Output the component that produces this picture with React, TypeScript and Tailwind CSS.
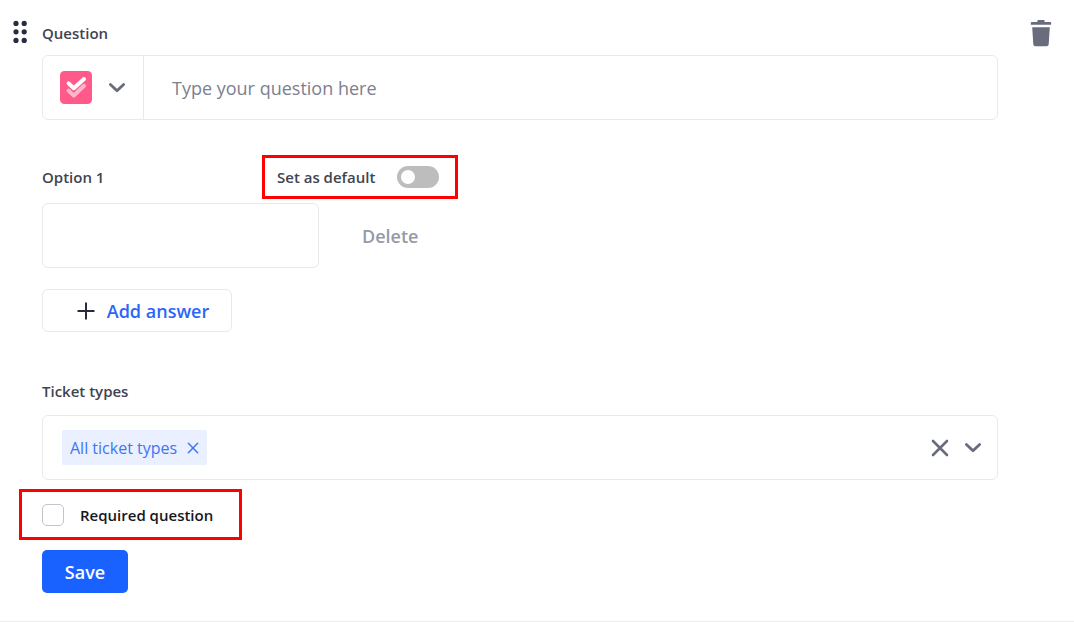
import { useState } from 'react';

function DragHandle() {
    return (
        <svg width="16" height="24" viewBox="0 0 16 24" fill="#272c3f" aria-hidden="true">
            {[3.4, 11.8, 20.4].map((y) => (
                <g key={y}>
                    <circle cx="4" cy={y} r="2.6" />
                    <circle cx="12.2" cy={y} r="2.6" />
                </g>
            ))}
        </svg>
    );
}

function TrashIcon() {
    return (
        <svg width="22" height="28" viewBox="0 1 22 28" fill="#686c7d" aria-hidden="true">
            <path d="M7.4 3V1.8Q7.4 1 8.3 1h5.4q.9 0 .9.8V3h5.6q1 0 1 1v1.8H.8V4q0-1 1-1z" />
            <path d="M2.2 8.2h17.6l-1.1 17q-.1 2-2.1 2H5.4q-2 0-2.1-2z" />
        </svg>
    );
}

function ChevronIcon() {
    return (
        <svg width="18" height="12" viewBox="0 0 18 12" fill="none" stroke="#686c7d" strokeWidth="2.8" aria-hidden="true">
            <path d="M2.4 2.4 9 8.8l6.6-6.4" strokeLinecap="round" strokeLinejoin="round" />
        </svg>
    );
}

function CrossIcon({ size, width }: { size: number; width: number }) {
    return (
        <svg width={size} height={size} viewBox="0 0 18 18" fill="none" stroke="currentColor" strokeWidth={width} aria-hidden="true">
            <path d="m2 2 14 14M16 2 2 16" strokeLinecap="round" />
        </svg>
    );
}

function MultiChoiceIcon() {
    return (
        <svg width="32" height="33" viewBox="0 0 32 33" fill="none" aria-hidden="true">
            <rect width="32" height="33" rx="4.5" fill="#ff5a8a" />
            <g strokeWidth="4" strokeLinecap="round" strokeLinejoin="round">
                <path d="m8.6 19.6 5.2 5 10.2-9.8" stroke="#ffb5cc" />
                <path d="m8.6 12.4 5.2 4.8L24 8" stroke="#fff" />
            </g>
        </svg>
    );
}

export default function App() {
    const [question, setQuestion] = useState('');
    const [answer, setAnswer] = useState('');
    const [isDefault, setIsDefault] = useState(false);
    const [required, setRequired] = useState(false);

    return (
        <form
            className="flex border-b border-[#ebecef] bg-white pt-5 pr-[22px] pb-7 pl-3 font-['Open_Sans',sans-serif] text-[#3f4451]"
            onSubmit={(e) => e.preventDefault()}
        >
            <button type="button" aria-label="Move question" className="mr-[14px] h-6 w-4 cursor-grab self-start">
                <DragHandle />
            </button>

            <div className="min-w-0 flex-1 pt-px">
                <label htmlFor="question" className="block text-[15px] leading-6 font-semibold">
                    Question
                </label>
                <div className="mt-[10px] flex h-[65px] rounded-md border border-[#e8e9ed]">
                    <button
                        type="button"
                        aria-label="Question type"
                        className="flex w-[101px] items-center gap-4 border-r border-[#e8e9ed] pl-[17px]"
                    >
                        <MultiChoiceIcon />
                        <ChevronIcon />
                    </button>
                    <input
                        id="question"
                        type="text"
                        value={question}
                        onChange={(e) => setQuestion(e.target.value)}
                        placeholder="Type your question here"
                        className="min-w-0 flex-1 rounded-r-md px-7 text-lg outline-none placeholder:text-[#7d808d]"
                    />
                </div>

                <div className="mt-[35px] flex items-center">
                    <label htmlFor="option-1" className="w-[220px] text-[15px] leading-6 font-semibold">
                        Option 1
                    </label>
                    <label className="flex h-11 w-[196px] items-center justify-between border-3 border-[#fd0000] pr-4 pl-3 text-[15px] leading-6 font-semibold">
                        Set as default
                        <input
                            type="checkbox"
                            role="switch"
                            checked={isDefault}
                            onChange={(e) => setIsDefault(e.target.checked)}
                            className="flex h-[22px] w-[42px] appearance-none items-center rounded-full bg-[#bdbdbd] px-1 before:size-[14px] before:rounded-full before:bg-white checked:justify-end checked:bg-[#1a62ff]"
                        />
                    </label>
                </div>
                <div className="mt-1 flex items-center">
                    <input
                        id="option-1"
                        type="text"
                        value={answer}
                        onChange={(e) => setAnswer(e.target.value)}
                        className="h-[65px] w-[277px] rounded-md border border-[#e8e9ed] px-5 text-lg outline-none"
                    />
                    <button type="button" className="ml-[43px] text-lg font-semibold text-[#969aa6]">
                        Delete
                    </button>
                </div>

                <button
                    type="button"
                    className="mt-[21px] flex h-[43px] w-[190px] items-center justify-center gap-3 rounded-md border border-[#e8e9ed] pl-3 text-lg font-semibold text-[#2b66f6]"
                >
                    <svg width="18" height="18" viewBox="0 0 18 18" stroke="#272c3f" strokeWidth="2" aria-hidden="true">
                        <path d="M9 .5v17M.5 9h17" />
                    </svg>
                    Add answer
                </button>

                <label htmlFor="ticket-types" className="mt-[47px] block text-[15px] leading-6 font-semibold">
                    Ticket types
                </label>
                <div className="mt-3 flex h-[65px] items-center rounded-md border border-[#e8e9ed] pr-[15px] pl-[19px]">
                    <span className="flex h-[35px] items-center gap-[10px] rounded-xs bg-[#eaf0ff] px-2 text-base text-[#4174f4]">
                        All ticket types
                        <button type="button" aria-label="Remove All ticket types">
                            <CrossIcon size={12} width={2.2} />
                        </button>
                    </span>
                    <input id="ticket-types" type="text" className="min-w-0 flex-1 px-2 outline-none" />
                    <button type="button" aria-label="Clear ticket types" className="mr-[15px] text-[#686c7d]">
                        <CrossIcon size={18} width={2.6} />
                    </button>
                    <button type="button" aria-label="Show ticket types">
                        <ChevronIcon />
                    </button>
                </div>

                <label className="mt-[9px] -ml-[23px] flex h-[51px] w-[223px] items-center gap-4 border-3 border-[#fd0000] pl-5 text-[15px] leading-6 font-semibold text-[#17181c]">
                    <input
                        type="checkbox"
                        checked={required}
                        onChange={(e) => setRequired(e.target.checked)}
                        className="size-[22px] appearance-none rounded-[5px] border border-[#c2c3cb] checked:bg-[#1a62ff]"
                    />
                    Required question
                </label>

                <button type="submit" className="mt-[10px] h-[43px] w-[86px] rounded-[5px] bg-[#1a62ff] text-lg font-semibold text-white">
                    Save
                </button>
            </div>

            <button type="button" aria-label="Delete question" className="ml-8 h-7 w-[22px] self-start">
                <TrashIcon />
            </button>
        </form>
    );
}
